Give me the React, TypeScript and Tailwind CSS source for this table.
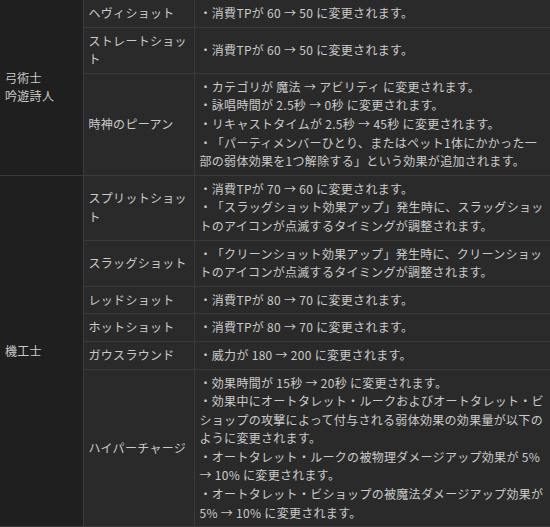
import React from "react";

type Row = { name: string; lines: string[] };

const groups: { job: string[]; rows: Row[] }[] = [
  {
    job: ["弓術士", "吟遊詩人"],
    rows: [
      { name: "ヘヴィショット", lines: ["・消費TPが 60 → 50 に変更されます。"] },
      { name: "ストレートショット", lines: ["・消費TPが 60 → 50 に変更されます。"] },
      {
        name: "時神のピーアン",
        lines: [
          "・カテゴリが 魔法 → アビリティ に変更されます。",
          "・詠唱時間が 2.5秒 → 0秒 に変更されます。",
          "・リキャストタイムが 2.5秒 → 45秒 に変更されます。",
          "・「パーティメンバーひとり、またはペット1体にかかった一部の弱体効果を1つ解除する」という効果が追加されます。",
        ],
      },
    ],
  },
  {
    job: ["機工士"],
    rows: [
      {
        name: "スプリットショット",
        lines: [
          "・消費TPが 70 → 60 に変更されます。",
          "・「スラッグショット効果アップ」発生時に、スラッグショットのアイコンが点滅するタイミングが調整されます。",
        ],
      },
      {
        name: "スラッグショット",
        lines: [
          "・「クリーンショット効果アップ」発生時に、クリーンショットのアイコンが点滅するタイミングが調整されます。",
        ],
      },
      { name: "レッドショット", lines: ["・消費TPが 80 → 70 に変更されます。"] },
      { name: "ホットショット", lines: ["・消費TPが 80 → 70 に変更されます。"] },
      { name: "ガウスラウンド", lines: ["・威力が 180 → 200 に変更されます。"] },
      {
        name: "ハイパーチャージ",
        lines: [
          "・効果時間が 15秒 → 20秒 に変更されます。",
          "・効果中にオートタレット・ルークおよびオートタレット・ビショップの攻撃によって付与される弱体効果の効果量が以下のように変更されます。",
          "・オートタレット・ルークの被物理ダメージアップ効果が 5% → 10% に変更されます。",
          "・オートタレット・ビショップの被魔法ダメージアップ効果が 5% → 10% に変更されます。",
        ],
      },
    ],
  },
];

export default function App() {
  return (
    <div
      className="w-[550px] h-[527px] overflow-hidden bg-[#262626] text-[#cacaca] text-[12px] leading-[18.6px] tracking-[0.3px] [text-spacing-trim:space-all]"
      style={{ fontFamily: '"Noto Sans CJK JP", "Noto Sans", sans-serif' }}
    >
      <table className="w-[551px] table-fixed border-collapse">
        <colgroup>
          <col className="w-[83px]" />
          <col className="w-[111px]" />
          <col />
        </colgroup>
        <tbody>
          {groups.map((g, gi) =>
            g.rows.map((r, ri) => (
              <tr key={`${gi}-${ri}`}>
                {ri === 0 && (
                  <td
                    rowSpan={g.rows.length}
                    className="bg-[#1f1f1f] border border-[#3a3a3a] border-l-0 border-t-0 px-[5px] py-[4px] align-middle"
                  >
                    {g.job.map((j) => (
                      <div key={j}>{j}</div>
                    ))}
                  </td>
                )}
                <td className="bg-[#2a2a2a] border border-[#3a3a3a] border-t-0 px-[5px] py-[4px] align-middle">
                  {r.name}
                </td>
                <td className="bg-[#2a2a2a] border border-[#3a3a3a] border-t-0 px-[5px] py-[4px] align-middle">
                  {r.lines.map((l, li) => (
                    <div key={li}>{l}</div>
                  ))}
                </td>
              </tr>
            ))
          )}
        </tbody>
      </table>
    </div>
  );
}
